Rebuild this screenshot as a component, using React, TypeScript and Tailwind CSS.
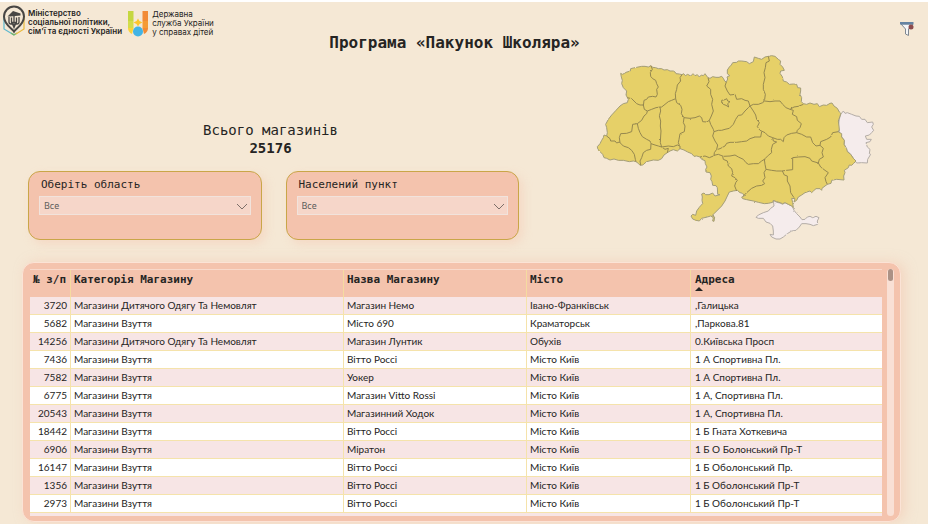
import React from "react";

type Shop = { id: number; category: string; name: string; city: string; address: string };

const SHOES = "Магазини Взуття";
const KIDS = "Магазини Дитячого Одягу Та Немовлят";

const shops: Shop[] = [
  { id: 3720, category: KIDS, name: "Магазин Немо", city: "Івано-Франківськ", address: ",Галицька" },
  { id: 5682, category: SHOES, name: "Місто 690", city: "Краматорськ", address: ",Паркова.81" },
  { id: 14256, category: KIDS, name: "Магазин Лунтик", city: "Обухів", address: "0.Київська Просп" },
  { id: 7436, category: SHOES, name: "Вітто Россі", city: "Місто Київ", address: "1 А Спортивна Пл." },
  { id: 7582, category: SHOES, name: "Уокер", city: "Місто Київ", address: "1 А Спортивна Пл." },
  { id: 6775, category: SHOES, name: "Магазин Vitto Rossi", city: "Місто Київ", address: "1 А, Спортивна Пл." },
  { id: 20543, category: SHOES, name: "Магазинний Ходок", city: "Місто Київ", address: "1 А, Спортивна Пл." },
  { id: 18442, category: SHOES, name: "Вітто Россі", city: "Місто Київ", address: "1 Б Гната Хоткевича" },
  { id: 6906, category: SHOES, name: "Міратон", city: "Місто Київ", address: "1 Б О Болонський Пр-Т" },
  { id: 16147, category: SHOES, name: "Вітто Россі", city: "Місто Київ", address: "1 Б Оболонський Пр." },
  { id: 1356, category: SHOES, name: "Вітто Россі", city: "Місто Київ", address: "1 Б Оболонський Пр-Т" },
  { id: 2973, category: SHOES, name: "Вітто Россі", city: "Місто Київ", address: "1 Б Оболонський Пр-Т" },
];

const country =
  "92,87 97,90 104,87 108,84 121,80 122,73 130,71 140,69 155,66 165,66 175,68 183,64 188,69 197,70 205,73 215,73 222,77 232,76 240,80 250,80 255,83 258,88 268,89 276,91 281,88 286,94 293,90 302,95 309,88 315,94 322,91 328,98 334,92 340,94 345,88 350,95 354,100 360,102 368,97 378,99 387,99 395,96 400,102 404,110 409,113 413,104 411,98 419,94 412,88 412,77 418,68 424,62 428,55 440,54 445,50 455,50 470,52 478,58 490,52 493,38 505,42 515,45 525,38 535,36 545,34 555,36 565,45 572,50 570,60 578,68 583,78 572,80 570,87 577,97 580,110 590,113 598,120 610,119 620,120 623,130 632,131 632,140 630,150 635,160 634,172 640,178 650,180 660,176 672,180 682,178 688,187 700,182 710,183 720,177 726,176 732,185 742,192 748,203 753,208 750,215 745,230 747,245 748,258 745,263 755,268 755,278 763,288 762,300 770,313 772,322 782,330 790,342 798,350 790,358 785,363 778,362 775,370 763,378 765,385 761,395 762,407 740,405 725,408 723,417 712,420 705,425 696,432 695,438 690,433 678,433 670,440 665,445 660,440 645,445 635,452 625,458 620,468 612,473 615,463 605,462 608,475 610,490 605,485 595,480 585,475 578,478 570,475 560,472 550,468 548,474 535,477 523,478 505,474 490,470 470,466 458,463 455,458 463,455 458,447 450,445 442,438 430,440 418,443 412,455 405,470 395,485 383,497 372,508 366,514 374,518 372,531 368,530 370,520 362,515 352,518 335,522 328,530 318,528 308,524 303,515 308,510 317,513 320,500 327,490 333,483 338,478 336,468 337,458 335,449 342,446 347,451 357,451 368,446 375,455 390,451 383,450 382,430 378,424 368,423 366,412 362,405 364,395 360,385 348,383 347,375 351,368 346,358 345,349 335,345 330,338 320,335 312,336 305,328 293,323 282,317 270,313 262,320 250,316 240,320 232,325 222,332 215,343 205,348 190,347 170,352 158,362 150,363 146,358 138,352 130,350 118,352 100,348 85,348 72,344 60,347 50,342 42,340 38,330 30,322 23,313 22,307 30,298 35,288 40,280 42,272 50,275 52,265 50,250 47,240 55,225 65,212 78,198 90,185 100,178 112,175 115,165 108,152 110,140 100,130 95,118 97,108 94,98";

const regionBorders = [
  "183,64 187,75 181,85 182,96 188,103 197,108 200,118 205,128 200,135 202,150 198,158 188,156 175,158 170,165 162,168 160,185",
  "112,160 125,163 132,170 140,178 150,182 160,182 163,195 172,200",
  "172,200 185,195 198,190 210,188 215,188 225,180 235,172 245,168 257,163",
  "276,91 270,100 272,110 262,122 260,135 256,148 257,163 260,175 272,183 276,195 274,208 282,220",
  "172,200 170,208 162,215 155,228 142,238 128,240 125,262 110,267 92,268 88,280 90,295",
  "50,275 60,283 62,290 75,290 80,296 88,293 100,305 115,310 125,318 133,330 136,345 138,352",
  "142,238 145,252 150,265 157,277 170,285 180,290 183,298 195,302 205,305 215,308",
  "183,298 182,315 170,318 160,325 155,340 150,350 152,362",
  "210,188 212,200 208,215 212,230 211,245 213,260 212,275 211,295 215,308 225,315 235,312 232,325",
  "215,308 235,305 250,307 262,302 270,305 270,313",
  "282,220 280,235 285,245 283,262 270,268 267,285 265,295 268,303",
  "282,220 300,222 315,220 328,215 335,220 338,232 350,233 358,228",
  "354,100 357,112 350,125 362,135 362,150 368,165 365,180 370,200 364,215 358,228 362,240 370,255 372,262 368,275 375,290 383,302 380,315 373,325 372,335",
  "330,338 345,335 358,340 370,335",
  "372,262 385,258 395,258 405,255 418,252 430,240 437,225 445,213 455,212 465,200 475,190 480,185",
  "409,113 405,125 412,140 420,152 435,150 440,165 455,163 465,168 475,170 480,185",
  "395,168 405,166 410,163 413,170 420,172 413,178 416,188 408,183 400,180 395,175 395,168",
  "535,36 538,50 528,55 526,70 522,85 525,100 520,120 520,135 526,150 524,165 520,172",
  "480,185 490,180 505,180 518,175 524,170 540,172 555,170 570,170 578,180 588,190 600,195 612,188 625,186 640,180",
  "600,195 610,198 607,210 620,217 622,228 634,238 630,250 622,258 620,265 605,267 590,272 582,280 580,292 572,285 562,285",
  "480,185 490,200 497,212 500,225 508,235 502,247 510,258 525,265 535,275 548,280 562,285",
  "515,262 512,278 495,278 480,283 470,290 455,292 440,294 420,294 410,297 405,305 390,313 383,315",
  "548,280 550,290 560,293 548,300 544,315 545,325 535,333 525,343 523,350",
  "372,333 385,330 400,336 420,335 435,332 445,338 460,345 468,355 475,360 490,358 505,358 515,350 523,345 525,360 528,375 522,385 525,400 518,410 524,418 515,423 500,425 485,432 470,445 460,455",
  "398,336 400,345 412,350 415,365 425,373 428,385 425,395 435,400 442,408 437,415 434,425 440,440",
  "528,375 545,378 560,380 575,380 590,378 608,376 608,340 625,338 645,337 660,342 665,350 685,356",
  "577,380 583,392 592,395 592,410 600,425 602,445 612,460",
  "685,356 688,345 700,338 696,325 700,312 690,303 692,292 710,285 722,278 728,265 745,262",
  "620,265 635,270 650,278 662,278 668,295 678,305 690,303",
  "685,356 692,368 705,378 715,385 705,400 708,412 712,420",
];

const luhansk =
  "760,200 765,207 772,205 785,210 798,215 808,216 815,225 825,225 832,235 848,233 850,240 845,248 851,258 845,265 838,272 826,275 830,285 844,285 840,292 828,295 832,308 840,315 838,328 842,330 833,345 832,356 815,355 800,356 792,345 782,330 770,318 763,300 763,288 755,278 748,262 745,245 748,225 752,210";

const crimea =
  "550,468 560,474 570,476 578,480 585,475 595,480 607,486 612,498 620,508 630,518 636,526 645,525 652,518 660,516 668,520 678,516 687,520 682,530 683,540 670,544 660,540 648,538 635,538 628,548 618,558 605,560 592,568 580,578 570,584 558,584 545,578 540,570 550,572 550,560 548,545 540,537 528,533 520,522 505,522 498,519 505,512 520,505 535,500 542,492 552,485";

function UkraineMap() {
  return (
    <svg viewBox="9 23 846 570" className="w-[282px] shrink-0" role="img" aria-label="Мапа областей України">
      <filter id="coast" x="0" y="0" width="1" height="1">
        <feTurbulence type="fractalNoise" baseFrequency="0.25" numOctaves="2" seed="4" />
        <feDisplacementMap in="SourceGraphic" scale="5" xChannelSelector="R" yChannelSelector="G" />
      </filter>
      <g filter="url(#coast)" strokeLinejoin="round">
        <rect x="9" y="23" width="846" height="570" fill="none" />
        <g fill="#f5ecec" stroke="#b3aca6" strokeWidth="3">
          <polygon points={luhansk} />
          <polygon points={crimea} />
        </g>
        <polygon points={country} fill="#e6d068" stroke="#a39d78" strokeWidth="3" />
        <g fill="none" stroke="#96884f" strokeWidth="3">
          {regionBorders.map((points) => (
            <polyline key={points} points={points} />
          ))}
        </g>
      </g>
    </svg>
  );
}

function MinistryLogo() {
  return (
    <svg viewBox="0 0 24 32" className="h-8 w-6 shrink-0" fill="none" aria-hidden="true">
      <path d="M2 11v13l10 6" stroke="#5bb8cf" strokeWidth="1.2" />
      <path d="M9 28l3 2 3-2" stroke="#76b56a" strokeWidth="1.2" />
      <path d="M14 29l8-5V11" stroke="#e9b93c" strokeWidth="1.2" />
      <path d="M12 26.500C10.500 23.500 2 20 2 11.500a10 10 0 0 1 20 0c0 8.500-8.500 12-10 15z" fill="#f5e8d5" stroke="#484644" strokeWidth="2" />
      <path d="M5.500 11.500L11 6l7.500 2.500v2L8 11.500z" fill="#484644" />
      <path d="M7 12v5q0 2 2 2h1.500l1.500 3.500 1.500-3.500H15q2 0 2-2V12M9.500 12.500v5M12 11v10M14.500 12.500v5M9 17.500h6" stroke="#484644" strokeWidth="1.300" />
    </svg>
  );
}

function ServiceLogo() {
  return (
    <svg viewBox="0 0 20 26" className="h-[26px] w-5 shrink-0" aria-hidden="true">
      <path d="M0 0h5.500v10H0z" fill="#c5d740" />
      <path d="M14.500 0H20v10h-5.500z" fill="#f28b36" />
      <path d="M0 10h5.500v7.500H0z" fill="#d3dc4a" />
      <path d="M20 10h-5.500v7.500H20z" fill="#f59b35" />
      <path d="M10 7.500l1.500 2.500 3 1.500-3 1.500L10 15.500 8.500 13l-3-1.500 3-1.500z" fill="#fcc62d" />
      <path d="M0 17h5.500L4 23q-4-2-4-6z" fill="#fbd33a" />
      <path d="M20 17h-5.500l1.500 6q4-2 4-6z" fill="#f28b36" />
      <circle cx="10" cy="20.500" r="5" fill="#43b4e4" />
    </svg>
  );
}

function FilterCard({ id, label }: { id: string; label: string }) {
  return (
    <div className="h-[69px] flex-1 rounded-xl border border-[#c9a648] bg-[#f4c3ad] px-[10px] pt-[5px] shadow-[4px_4px_10px_rgba(244,195,173,0.4)]">
      <label htmlFor={id} className="block pl-[2px] font-['DejaVu_Sans_Mono',monospace] text-[11px] leading-4 text-[#252423]">
        {label}
      </label>
      <div className="relative mt-[3px]">
        <select
          id={id}
          className="block h-[19px] w-full appearance-none border border-[#f1e3dc] bg-[#f6d6c9] pl-1 font-['Noto_Sans',sans-serif] text-[9px] leading-4 text-[#605e5c]"
        >
          <option>Все</option>
        </select>
        <svg viewBox="0 0 12 8" className="pointer-events-none absolute top-[7px] right-[3px] h-2 w-3" fill="none" stroke="#7d6f69" aria-hidden="true">
          <path d="M1 1l5 5 5-5" />
        </svg>
      </div>
    </div>
  );
}

const headCell = "border-r border-[#f5dba0] px-[3px] pt-[3px] text-left align-top font-bold";
const cell = "border-r border-b border-[#f5e3ab] px-[3px]";

export default function App() {
  return (
    <div className="bg-white pt-[2px] pr-[3px]">
      <main className="min-h-[522px] bg-[#f5e8d5] text-[#252423]">
        <header className="flex h-8 items-start pt-[3px] pr-[14px] pl-[2px]">
          <div className="flex gap-[2px]">
            <MinistryLogo />
            <p className="pt-[4px] font-[Inter,sans-serif] text-[8px] leading-[9px] font-semibold whitespace-nowrap">
              Міністерство
              <br />
              соціальної політики,
              <br />
              сім'ї та єдності України
            </p>
          </div>
          <div className="ml-[6px] flex gap-1 pt-[6px]">
            <ServiceLogo />
            <p className="-mt-px font-[Inter,sans-serif] text-[8px] leading-[9px] whitespace-nowrap">
              Державна
              <br />
              служба України
              <br />у справах дітей
            </p>
          </div>
          <button type="button" aria-label="Скинути фільтри" className="mt-4 ml-auto">
            <svg viewBox="0 0 14 16" className="h-4 w-[14px]" aria-hidden="true">
              <path d="M1 3h12L8.500 8v6.500L5.500 13V8z" fill="#f5f6f8" stroke="#7e8791" />
              <path d="M0 1h13.500v2.500H0z" fill="#6583a2" />
              <circle cx="11" cy="6" r="2.500" fill="#8c4b4d" />
            </svg>
          </button>
        </header>

        <h1 className="pr-[19px] text-center font-['DejaVu_Sans_Mono',monospace] text-[16px] leading-[18px] font-bold">
          Програма «Пакунок Школяра»
        </h1>

        <div className="flex items-start justify-between pr-[53px] pl-[28px]">
          <section className="w-[491px] pt-[69px]">
            <div className="pr-[6px] text-center font-['DejaVu_Sans_Mono',monospace] text-[14px] leading-[18px]">
              <h2>Всього магазинів</h2>
              <p className="font-bold">25176</p>
            </div>
            <div className="mt-[14px] flex gap-6">
              <FilterCard id="region" label="Оберіть область" />
              <FilterCard id="town" label="Населений пункт" />
            </div>
          </section>
          <UkraineMap />
        </div>

        <section className="mt-5 mr-[27px] ml-[22px] flex h-[260px] rounded-xl border border-[#fbe3d6] bg-[#f4c3ad] pt-[6px] pr-[6px] pb-[5px] pl-[7px] shadow-[4px_0_12px_rgba(244,195,173,0.5)]">
          <div className="flex-1 overflow-hidden border-t border-[#f8d9cb]">
            <table className="w-full table-fixed border-separate border-spacing-0 whitespace-nowrap">
              <colgroup>
                <col className="w-[41px]" />
                <col className="w-[273px]" />
                <col className="w-[183px]" />
                <col className="w-[164px]" />
                <col />
              </colgroup>
              <thead className="font-['DejaVu_Sans_Mono',monospace] text-[11px] leading-[14px]">
                <tr className="h-[27px]">
                  <th scope="col" className={headCell}>№ з/п</th>
                  <th scope="col" className={headCell}>Категорія Магазину</th>
                  <th scope="col" className={headCell}>Назва Магазину</th>
                  <th scope="col" className={headCell}>Місто</th>
                  <th scope="col" aria-sort="ascending" className="px-1 pt-[3px] text-left align-top font-bold">
                    Адреса
                    <svg viewBox="0 0 8 4" className="h-1 w-2" aria-hidden="true">
                      <path d="M0 4l4-4 4 4z" fill="#252423" />
                    </svg>
                  </th>
                </tr>
              </thead>
              <tbody className="font-[Lato,sans-serif] text-[10px] leading-[17px]">
                {shops.map((shop) => (
                  <tr key={shop.id} className="h-[18px] odd:bg-[#f7e5e5] even:bg-white">
                    <td className={`${cell} text-right`}>{shop.id}</td>
                    <td className={cell}>{shop.category}</td>
                    <td className={cell}>{shop.name}</td>
                    <td className={cell}>{shop.city}</td>
                    <td className="border-b border-[#f5e3ab] px-1">{shop.address}</td>
                  </tr>
                ))}
                <tr className="h-[18px] bg-[#f7e5e5]">
                  <td colSpan={5} />
                </tr>
              </tbody>
            </table>
          </div>
          <div className="ml-[5px] w-[7px] rounded-full bg-[#f9e0d5]" aria-hidden="true">
            <div className="mx-auto h-3 w-[5px] rounded-full bg-[#ab9185]" />
          </div>
        </section>
      </main>
    </div>
  );
}
